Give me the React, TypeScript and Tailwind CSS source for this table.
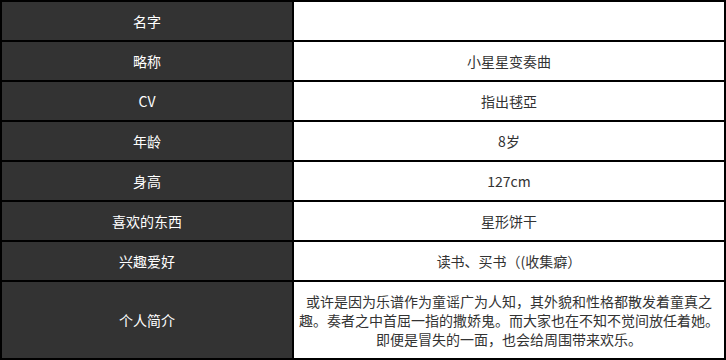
import React from "react";

const rows: [string, string][] = [
  ["名字", ""],
  ["略称", "小星星变奏曲"],
  ["CV", "指出毬亞"],
  ["年龄", "8岁"],
  ["身高", "127cm"],
  ["喜欢的东西", "星形饼干"],
  ["兴趣爱好", "读书、买书（(收集癖）"],
];

export default function App() {
  return (
    <div
      className="w-[726px] h-[360px] bg-white"
      style={{ fontFamily: '"Microsoft YaHei", "Noto Sans CJK SC", "Noto Sans", sans-serif' }}
    >
      <div className="grid grid-cols-[290px_430px] grid-rows-[38px_38px_38px_38px_38px_38px_38px_76px] gap-[2px] p-[2px] bg-black w-[726px] h-[360px]">
        {rows.map(([k, v]) => (
          <React.Fragment key={k}>
            <div className="bg-[#333333] text-white text-[14px] flex items-center justify-center">{k}</div>
            <div className="bg-white text-[#333333] text-[14px] flex items-center justify-center">{v}</div>
          </React.Fragment>
        ))}
        <div className="bg-[#333333] text-white text-[14px] flex items-center justify-center">个人简介</div>
        <div className="bg-white text-[#333333] text-[14px] leading-[19px] flex items-center justify-center text-center px-[4px]">
          <p>或许是因为乐谱作为童谣广为人知，其外貌和性格都散发着童真之趣。奏者之中首屈一指的撒娇鬼。而大家也在不知不觉间放任着她。即便是冒失的一面，也会给周围带来欢乐。</p>
        </div>
      </div>
    </div>
  );
}
